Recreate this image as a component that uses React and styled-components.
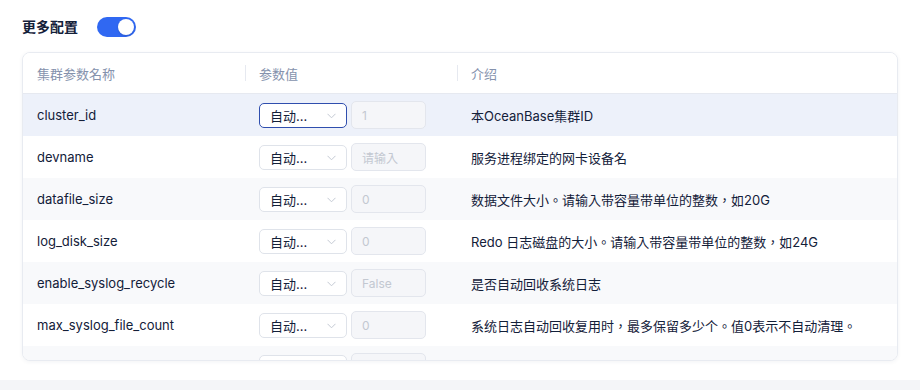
import React from "react";
import styled, { createGlobalStyle, css } from "styled-components";

const Global = createGlobalStyle`
  html, body { margin: 0; padding: 0; background: #ffffff; }
  body {
    font-family: "Inter", "Noto Sans CJK TC", sans-serif;
    color: #132039;
    -webkit-font-smoothing: antialiased;
  }
  * { box-sizing: border-box; }
`;

const Page = styled.div`
  width: 920px;
  height: 390px;
  display: flex;
  flex-direction: column;
  overflow: hidden;
`;

const Content = styled.div`
  background: #ffffff;
  padding: 17px 22px 0 22px;
  height: 380px;
  display: flex;
  flex-direction: column;
`;

const Footer = styled.div`
  flex: 1;
  background: #f4f5f8;
`;

const TitleRow = styled.div`
  display: flex;
  align-items: center;
  gap: 19px;
  height: 20px;
`;

const Title = styled.div`
  font-size: 14px;
  font-weight: 600;
  color: #132039;
  line-height: 20px;
`;

const Toggle = styled.div`
  width: 39px;
  height: 20px;
  border-radius: 10px;
  background: #3068f2;
  position: relative;
  &::after {
    content: "";
    position: absolute;
    top: 2px;
    right: 2px;
    width: 16px;
    height: 16px;
    border-radius: 50%;
    background: #ffffff;
    box-shadow: 0 1px 2px rgba(0, 0, 0, 0.15);
  }
`;

const Card = styled.div`
  margin-top: 15px;
  height: 309px;
  border: 1px solid #e8ebf1;
  border-radius: 8px;
  overflow: hidden;
  box-shadow: 0 1px 4px rgba(30, 50, 90, 0.06);
  background: #ffffff;
`;

const GridRow = styled.div`
  display: grid;
  grid-template-columns: 222px 212px 1fr;
  height: 42px;
  align-items: center;
  background: ${(p) =>
    p.$active ? "#edf1fa" : p.$striped ? "#f8f9fb" : "#ffffff"};
`;

const HeadRow = styled(GridRow)`
  height: 41px;
  border-bottom: 1px solid #e6e9f0;
`;

const HeadCell = styled.div`
  position: relative;
  padding-left: 14px;
  font-size: 13px;
  color: #8592ad;
  height: 100%;
  display: flex;
  align-items: center;
  ${(p) =>
    p.$sep &&
    css`
      &::before {
        content: "";
        position: absolute;
        left: 0;
        top: 12px;
        bottom: 12px;
        width: 1px;
        background: #e6e9f0;
      }
    `}
`;

const Cell = styled.div`
  padding-left: 14px;
  font-size: 13px;
  color: #132039;
  display: flex;
  align-items: center;
  gap: 4px;
  white-space: nowrap;
`;

const Select = styled.div`
  width: 88px;
  height: 25px;
  border: 1px solid ${(p) => (p.$focused ? "#2f4eae" : "#dfe3ea")};
  border-radius: 5px;
  background: #ffffff;
  display: flex;
  align-items: center;
  justify-content: space-between;
  padding: 0 10px 0 10px;
  font-size: 13px;
  color: #132039;
`;

const Chevron = styled.svg`
  width: 9px;
  height: 6px;
  margin-top: 1px;
`;

const Input = styled.div`
  width: 75px;
  height: 28px;
  border: 1px solid #e3e6ed;
  border-radius: 5px;
  background: #f5f6f9;
  display: flex;
  align-items: center;
  padding-left: 10px;
  font-size: 12px;
  color: #c3c8d1;
`;

const rows = [
  { name: "cluster_id", value: "1", desc: "本OceanBase集群ID" },
  { name: "devname", value: "请输入", desc: "服务进程绑定的网卡设备名" },
  {
    name: "datafile_size",
    value: "0",
    desc: "数据文件大小。请输入带容量带单位的整数，如20G",
  },
  {
    name: "log_disk_size",
    value: "0",
    desc: "Redo 日志磁盘的大小。请输入带容量带单位的整数，如24G",
  },
  { name: "enable_syslog_recycle", value: "False", desc: "是否自动回收系统日志" },
  {
    name: "max_syslog_file_count",
    value: "0",
    desc: "系统日志自动回收复用时，最多保留多少个。值0表示不自动清理。",
  },
  { name: "", value: "", desc: "" },
];

function ChevronIcon() {
  return (
    <Chevron viewBox="0 0 9 6" fill="none">
      <path d="M0.5 0.8 L4.5 4.8 L8.5 0.8" stroke="#c4c9d3" strokeWidth="1" />
    </Chevron>
  );
}

export default function App() {
  return (
    <Page>
      <Global />
      <Content>
        <TitleRow>
          <Title>更多配置</Title>
          <Toggle />
        </TitleRow>
        <Card>
          <HeadRow>
            <HeadCell>集群参数名称</HeadCell>
            <HeadCell $sep>参数值</HeadCell>
            <HeadCell $sep>介绍</HeadCell>
          </HeadRow>
          {rows.map((r, i) => (
            <GridRow key={i} $active={i === 0} $striped={i % 2 === 0}>
              <Cell>{r.name}</Cell>
              <Cell>
                <Select $focused={i === 0}>
                  <span>{i < 6 ? "自动..." : ""}</span>
                  <ChevronIcon />
                </Select>
                <Input>{r.value}</Input>
              </Cell>
              <Cell>{r.desc}</Cell>
            </GridRow>
          ))}
        </Card>
      </Content>
      <Footer />
    </Page>
  );
}
